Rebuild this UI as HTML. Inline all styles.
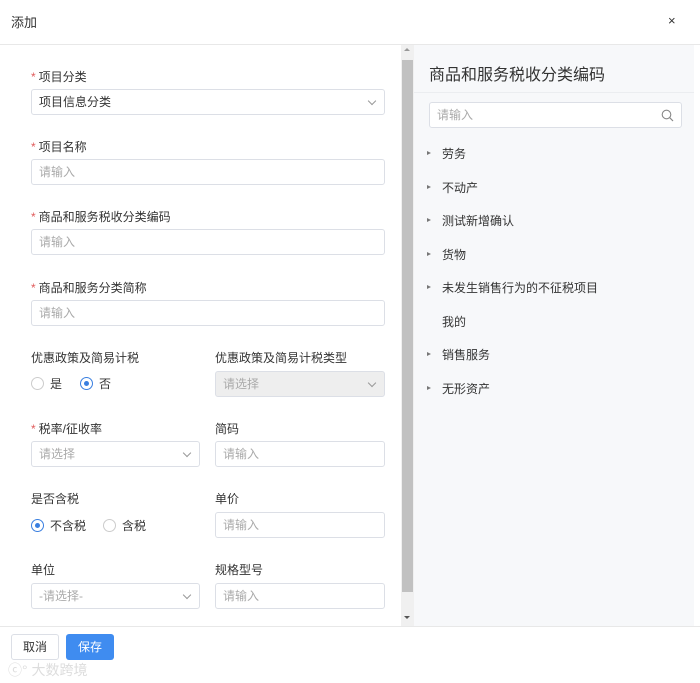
<!DOCTYPE html><html><head><meta charset="utf-8"><style>
*{box-sizing:border-box;margin:0;padding:0}
body{width:700px;height:683px;background:#fff;position:relative;overflow:hidden;font-family:"Liberation Sans","Noto Sans CJK SC",sans-serif;font-size:12px;color:#333}
.a{position:absolute}
.lab{position:absolute;font-size:12px;color:#333;line-height:14px}
.lab i{color:#e05b5b;font-style:normal;margin-right:3px}
.in{position:absolute;height:26px;border:1px solid #dcdfe6;border-radius:3px;background:#fff;padding-left:7px;line-height:24px;color:#aaa;font-size:12px}
.in.d{background:#eee}
.ch{position:absolute;right:9px;top:8px;width:6px;height:6px;border-right:1px solid #999;border-bottom:1px solid #999;transform:rotate(45deg)}
.r{position:absolute;width:13px;height:13px;border:1px solid #ccc;border-radius:50%;background:#fff}
.r.on{border-color:#3a7fe0}
.r.on:after{content:"";position:absolute;left:3px;top:3px;width:5px;height:5px;border-radius:50%;background:#3a7fe0}
.t{position:absolute;left:442px;font-size:12px;color:#333;line-height:14px}
.tr{position:absolute;left:427px;width:0;height:0;border-left:4px solid #777;border-top:2.5px solid transparent;border-bottom:2.5px solid transparent}
</style></head><body>
<div class="a" style="left:11px;top:12px;font-size:13px;color:#333">添加</div>
<div class="a" style="left:668px;top:13px;font-size:13px;color:#333">×</div>
<div class="a" style="left:0;top:44px;width:700px;height:1px;background:#e8e8e8"></div>
<div class="a" style="left:414px;top:45px;width:280px;height:581px;background:#f7f8fa"></div>
<div class="a" style="left:414px;top:92px;width:280px;height:1px;background:#ebedf0"></div>
<div class="a" style="left:401px;top:45px;width:13px;height:581px;background:#f0f0f0"></div>
<div class="a" style="left:402px;top:60px;width:11px;height:532px;background:#c1c1c1"></div>
<div class="a" style="left:404px;top:48px;border-left:3px solid transparent;border-right:3px solid transparent;border-bottom:3px solid #999"></div>
<div class="a" style="left:404px;top:616px;border-left:3px solid transparent;border-right:3px solid transparent;border-top:3px solid #555"></div>
<div class="a" style="left:0;top:626px;width:700px;height:1px;background:#e8e8e8"></div>

<div class="lab" style="left:31px;top:70px"><i>*</i>项目分类</div>
<div class="in" style="left:31px;top:89px;width:354px;color:#333">项目信息分类<span class="ch"></span></div>
<div class="lab" style="left:31px;top:140px"><i>*</i>项目名称</div>
<div class="in" style="left:31px;top:159px;width:354px">请输入</div>
<div class="lab" style="left:31px;top:210px"><i>*</i>商品和服务税收分类编码</div>
<div class="in" style="left:31px;top:229px;width:354px">请输入</div>
<div class="lab" style="left:31px;top:281px"><i>*</i>商品和服务分类简称</div>
<div class="in" style="left:31px;top:300px;width:354px">请输入</div>

<div class="lab" style="left:31px;top:351px">优惠政策及简易计税</div>
<div class="r" style="left:31px;top:377px"></div><div class="lab" style="left:50px;top:377px">是</div>
<div class="r on" style="left:80px;top:377px"></div><div class="lab" style="left:99px;top:377px">否</div>
<div class="lab" style="left:215px;top:351px">优惠政策及简易计税类型</div>
<div class="in d" style="left:215px;top:371px;width:170px">请选择<span class="ch"></span></div>

<div class="lab" style="left:31px;top:422px"><i>*</i>税率/征收率</div>
<div class="in" style="left:31px;top:441px;width:169px">请选择<span class="ch"></span></div>
<div class="lab" style="left:215px;top:422px">简码</div>
<div class="in" style="left:215px;top:441px;width:170px">请输入</div>

<div class="lab" style="left:31px;top:492px">是否含税</div>
<div class="r on" style="left:31px;top:519px"></div><div class="lab" style="left:50px;top:519px">不含税</div>
<div class="r" style="left:103px;top:519px"></div><div class="lab" style="left:122px;top:519px">含税</div>
<div class="lab" style="left:215px;top:492px">单价</div>
<div class="in" style="left:215px;top:512px;width:170px">请输入</div>

<div class="lab" style="left:31px;top:563px">单位</div>
<div class="in" style="left:31px;top:583px;width:169px">-请选择-<span class="ch"></span></div>
<div class="lab" style="left:215px;top:563px">规格型号</div>
<div class="in" style="left:215px;top:583px;width:170px">请输入</div>

<div class="a" style="left:429px;top:61px;font-size:16px;color:#333">商品和服务税收分类编码</div>
<div class="in" style="left:429px;top:102px;width:253px">请输入
<svg class="a" style="right:7px;top:6px" width="13" height="13" viewBox="0 0 13 13"><circle cx="5.5" cy="5.5" r="4.3" fill="none" stroke="#888" stroke-width="1.1"/><line x1="8.6" y1="8.6" x2="12" y2="12" stroke="#888" stroke-width="1.2"/></svg></div>
<div class="tr" style="top:151px"></div><div class="t" style="top:147px">劳务</div>
<div class="tr" style="top:185px"></div><div class="t" style="top:181px">不动产</div>
<div class="tr" style="top:218px"></div><div class="t" style="top:214px">测试新增确认</div>
<div class="tr" style="top:252px"></div><div class="t" style="top:248px">货物</div>
<div class="tr" style="top:285px"></div><div class="t" style="top:281px">未发生销售行为的不征税项目</div>
<div class="t" style="top:315px">我的</div>
<div class="tr" style="top:352px"></div><div class="t" style="top:348px">销售服务</div>
<div class="tr" style="top:386px"></div><div class="t" style="top:382px">无形资产</div>

<div class="a" style="left:11px;top:634px;width:48px;height:26px;border:1px solid #dcdfe6;border-radius:3px;text-align:center;line-height:24px;color:#333">取消</div>
<div class="a" style="left:66px;top:634px;width:48px;height:26px;background:#3f8cf0;border-radius:3px;text-align:center;line-height:26px;color:#fff">保存</div>
<div class="a" style="left:8px;top:660px;font-size:14px;color:#ddd">ⓒ° 大数跨境</div>
</body></html>
